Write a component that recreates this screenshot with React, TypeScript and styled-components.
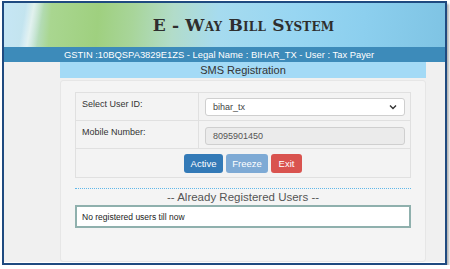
import React from "react";
import styled, { createGlobalStyle } from "styled-components";

const Global = createGlobalStyle`
  html, body { margin: 0; padding: 0; background: #ffffff; }
  body { font-family: "Liberation Sans", Arial, sans-serif; }
  * { box-sizing: border-box; }
`;

const Frame = styled.div`
  margin: 1px 0 0 2px;
  width: 445px;
  height: 264px;
  border: 2px solid #1f4a80;
  box-shadow: 2px 3px 2px rgba(0, 0, 0, 0.3);
  background: #ffffff;
  display: flex;
  flex-direction: column;
  overflow: hidden;
`;

const Header = styled.div`
  height: 44px;
  flex: none;
  display: flex;
  align-items: center;
  justify-content: center;
  padding-left: 38px;
  background:
    linear-gradient(100deg, rgba(255,255,255,0) 0px, rgba(255,255,255,0) 22px, rgba(255,255,255,0.55) 30px, rgba(255,255,255,0) 40px),
    linear-gradient(95deg, #c6e6f5 0px, #c3e4ee 24px, #a9d690 48px, #9fd07f 95px, #a8d59a 130px, #b2dcc9 170px, #a6dbef 215px, #98d6f2 290px, #8ccfee 360px, #7fc4e4 441px);
`;

const Title = styled.h1`
  margin: 0;
  font-family: "DejaVu Serif", "Liberation Serif", serif;
  font-variant: small-caps;
  font-weight: bold;
  font-size: 17px;
  letter-spacing: 0.2px;
  color: #2e2e2e;
`;

const InfoBar = styled.div`
  height: 15px;
  flex: none;
  background: #3d8bba;
  color: #ffffff;
  font-size: 9.4px;
  line-height: 15px;
  padding-left: 60px;
  white-space: nowrap;
`;

const Content = styled.div`
  background: #f0f0f0;
  height: 200px;
  padding-left: 56px;
  flex: none;
`;

const Container = styled.div`
  width: 366px;
  display: flex;
  flex-direction: column;
  gap: 2px;
`;

const SectionTitle = styled.div`
  height: 16px;
  background: #a3daf6;
  color: #333333;
  font-size: 11px;
  line-height: 16px;
  text-align: center;
`;

const Panel = styled.div`
  height: 182px;
  background: #f4f4f4;
  border: 1px solid #e6e6e6;
  border-radius: 3px;
  padding: 11px 14px 0 14px;
`;

const Table = styled.div`
  width: 336px;
  border: 1px solid #e0e0e0;
  display: grid;
  grid-template-columns: 122px 1fr;
  background: #f3f3f3;
`;

const Cell = styled.div<{ $right?: boolean }>`
  height: 28px;
  border-bottom: 1px solid #e0e0e0;
  border-left: ${(p) => (p.$right ? "1px solid #e0e0e0" : "none")};
  font-size: 9px;
  color: #333333;
  padding: ${(p) => (p.$right ? "5px 5px 0 6px" : "6px 0 0 6px")};
`;

const SelectBox = styled.div`
  height: 18px;
  background: #ffffff;
  border: 1px solid #cfcfcf;
  border-radius: 3px;
  display: flex;
  align-items: center;
  justify-content: space-between;
  padding: 0 7px 0 7px;
  font-size: 9px;
  color: #444;
`;

const InputBox = styled.div`
  margin-top: 1px;
  height: 18px;
  background: #ebebeb;
  border: 1px solid #cfcfcf;
  border-radius: 3px;
  display: flex;
  align-items: center;
  padding: 0 7px;
  font-size: 9px;
  color: #555;
`;

const ButtonRow = styled.div`
  grid-column: 1 / span 2;
  height: 28px;
  display: flex;
  justify-content: center;
  align-items: center;
  gap: 3px;
`;

const Button = styled.div<{ $color: string; $w: number }>`
  width: ${(p) => p.$w}px;
  height: 19px;
  background: ${(p) => p.$color};
  border-radius: 3px;
  color: #ffffff;
  font-size: 9.5px;
  display: flex;
  align-items: center;
  justify-content: center;
`;

const Divider = styled.div`
  width: 336px;
  margin-top: 10px;
  border-top: 1px dotted #5fb8ea;
`;

const SubTitle = styled.div`
  width: 336px;
  text-align: center;
  font-size: 11.5px;
  color: #555555;
  line-height: 14px;
  margin-top: 1px;
`;

const ListBox = styled.div`
  width: 336px;
  height: 23px;
  background: #ffffff;
  border: 2px solid #8fb0ad;
  font-size: 8.5px;
  color: #222;
  padding: 5px 0 0 5px;
  margin-top: 1px;
`;

const Chevron = () => (
  <svg width="8" height="6" viewBox="0 0 8 6">
    <path d="M1 1.5 L4 4.5 L7 1.5" fill="none" stroke="#333" strokeWidth="1.4" />
  </svg>
);

export default function App() {
  return (
    <>
      <Global />
      <Frame>
        <Header>
          <Title>E - Way Bill System</Title>
        </Header>
        <InfoBar>GSTIN :10BQSPA3829E1ZS - Legal Name : BIHAR_TX - User : Tax Payer</InfoBar>
        <Content>
          <Container>
            <SectionTitle>SMS Registration</SectionTitle>
            <Panel>
              <Table>
                <Cell>Select User ID:</Cell>
                <Cell $right>
                  <SelectBox>
                    <span>bihar_tx</span>
                    <Chevron />
                  </SelectBox>
                </Cell>
                <Cell>Mobile Number:</Cell>
                <Cell $right>
                  <InputBox>8095901450</InputBox>
                </Cell>
                <ButtonRow>
                  <Button $color="#337ab7" $w={39}>Active</Button>
                  <Button $color="#7eaad5" $w={42}>Freeze</Button>
                  <Button $color="#d9534f" $w={31}>Exit</Button>
                </ButtonRow>
              </Table>
              <Divider />
              <SubTitle>-- Already Registered Users --</SubTitle>
              <ListBox>No registered users till now</ListBox>
            </Panel>
          </Container>
        </Content>
      </Frame>
    </>
  );
}
